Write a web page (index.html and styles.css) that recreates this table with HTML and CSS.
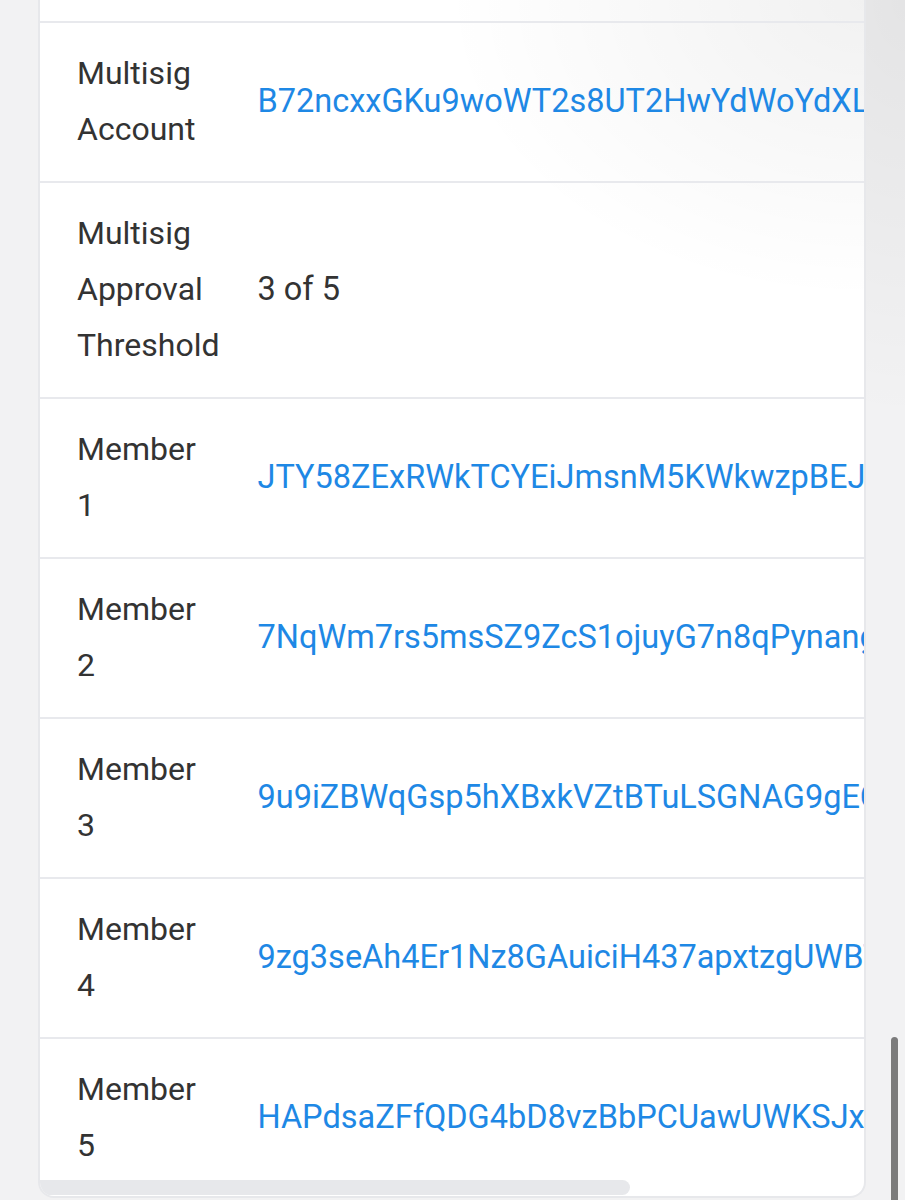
FILE: index.html
```html
<!DOCTYPE html>
<html lang="en">
<head>
<meta charset="utf-8">
<title>Multisig details</title>
<link rel="stylesheet" href="styles.css">
</head>
<body>
<div class="page">
  <div class="card">
    <div class="scroller">
      <table class="details">
        <tbody>
          <tr class="tail"><td class="label"></td><td class="value"></td></tr>
          <tr>
            <td class="label">Multisig Account</td>
            <td class="value"><a href="#">B72ncxxGKu9woWT2s8UT2HwYdWoYdXLpT4aKc9sNvE2f</a></td>
          </tr>
          <tr>
            <td class="label">Multisig Approval Threshold</td>
            <td class="value plain">3 of 5</td>
          </tr>
          <tr>
            <td class="label">Member 1</td>
            <td class="value"><a href="#">JTY58ZExRWkTCYEiJmsnM5KWkwzpBEJ3uHcRb7nXq1Ld</a></td>
          </tr>
          <tr>
            <td class="label">Member 2</td>
            <td class="value"><a href="#">7NqWm7rs5msSZ9ZcS1ojuyG7n8qPynangKfT4xW2dVbE</a></td>
          </tr>
          <tr>
            <td class="label">Member 3</td>
            <td class="value"><a href="#">9u9iZBWqGsp5hXBxkVZtBTuLSGNAG9gECmR7vKdN2hYs</a></td>
          </tr>
          <tr>
            <td class="label">Member 4</td>
            <td class="value"><a href="#">9zg3seAh4Er1Nz8GAuiciH437apxtzgUWBTxQ5mLc2R</a></td>
          </tr>
          <tr class="last">
            <td class="label">Member 5</td>
            <td class="value"><a href="#">HAPdsaZFfQDG4bD8vzBbPCUawUWKSJxqE9rT3yMnV6kP</a></td>
          </tr>
        </tbody>
      </table>
    </div>
    <div class="hscroll"><div class="hthumb"></div></div>
  </div>
</div>
<div class="vthumb"></div>
</body>
</html>
```

FILE: styles.css
```css
html, body {
  margin: 0;
  padding: 0;
}

body {
  width: 905px;
  height: 1200px;
  overflow: hidden;
  background:
    radial-gradient(ellipse 260px 420px at 100% 0%, rgba(0, 0, 0, 0.06), rgba(0, 0, 0, 0) 100%),
    #f2f2f3;
  font-family: Roboto, "Liberation Sans", Arial, sans-serif;
  position: relative;
}

.page {
  padding: 0 39px 0 38px;
}

.card {
  width: 828px;
  box-sizing: border-box;
  border: 2px solid #e7e8eb;
  border-top: none;
  border-radius: 0 0 16px 16px;
  overflow: hidden;
  background:
    radial-gradient(ellipse 420px 300px at 100% 0%, rgba(0, 0, 0, 0.055), rgba(0, 0, 0, 0) 100%),
    #ffffff;
}

.scroller {
  overflow: hidden;
}

.details {
  border-collapse: collapse;
  font-size: 32px;
  line-height: 56px;
  color: #333333;
}

.details td {
  border-bottom: 2px solid #e8e9ed;
  padding-top: 22px;
  padding-bottom: 24px;
  vertical-align: middle;
}

.details .label {
  width: 1px;
  padding-left: 37px;
  padding-right: 0;
  vertical-align: top;
}

.details .value {
  padding-left: 38px;
  padding-right: 38px;
  white-space: nowrap;
  font-size: 32.5px;
}

.details .value a {
  color: #1e88e5;
  text-decoration: none;
}

.details .tail td {
  padding: 0;
  height: 21px;
}

.details .last td {
  border-bottom: none;
  padding-bottom: 7px;
}

.hscroll {
  height: 16px;
  display: flex;
}

.hthumb {
  width: 590px;
  height: 15px;
  background: #e7e8eb;
  border-radius: 0 8px 8px 0;
}

.vthumb {
  position: absolute;
  left: 891px;
  top: 1037px;
  width: 7px;
  height: 175px;
  border-radius: 4px;
  background: #7b7b7b;
}
```
